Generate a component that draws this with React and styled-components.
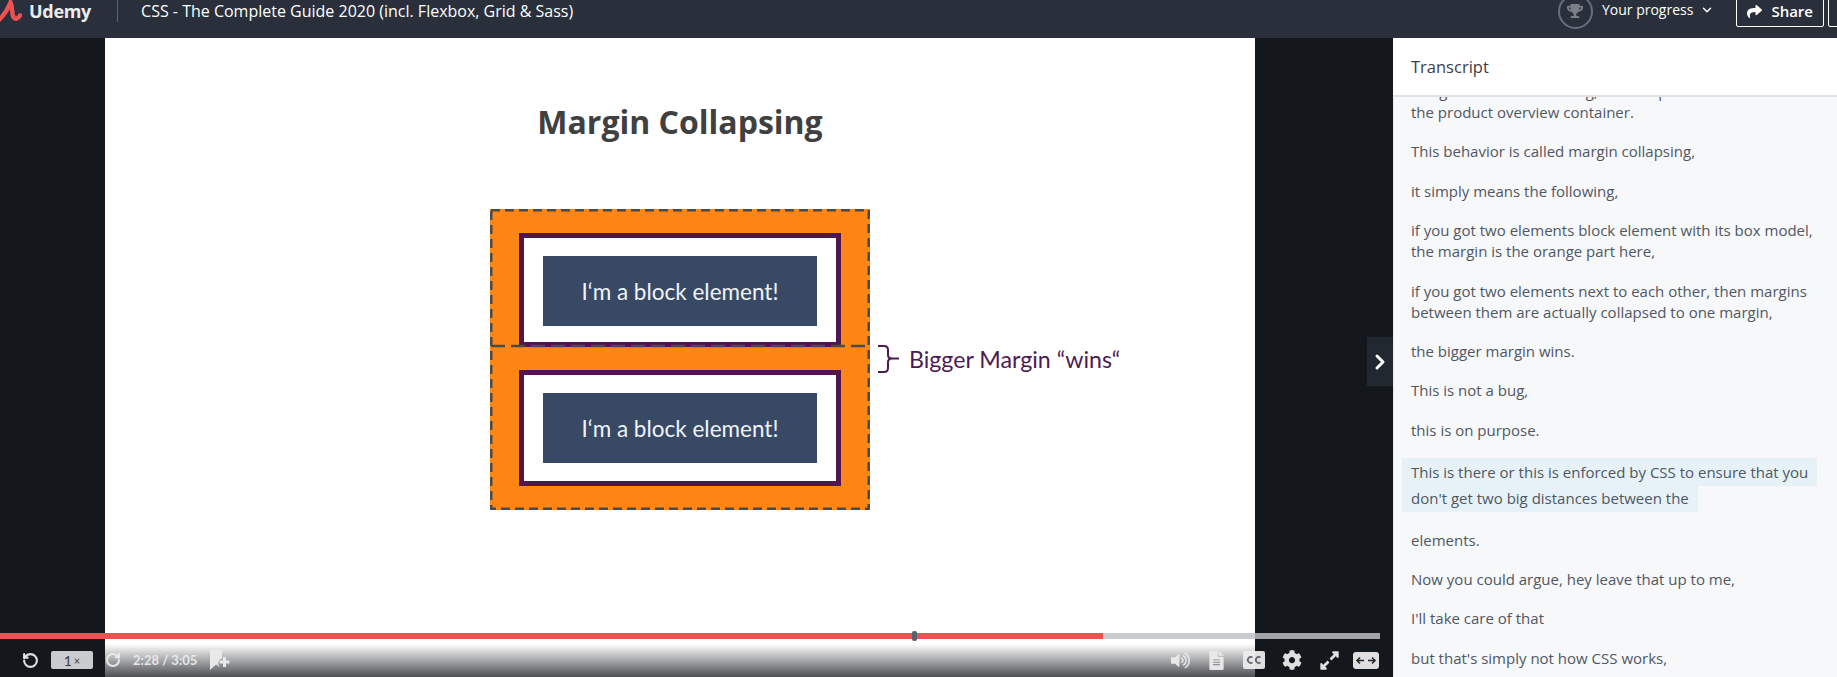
import React from "react";
import styled, { createGlobalStyle } from "styled-components";
import { ChevronDown, ChevronRight, RotateCcw, RotateCw } from "lucide-react";
import {
  FaCog,
  FaExpandAlt,
  FaFileAlt,
  FaShare,
  FaTrophy,
  FaVolumeUp,
} from "react-icons/fa";

const GlobalStyle = createGlobalStyle`
  html, body {
    margin: 0;
    padding: 0;
    height: 100%;
    overflow: hidden;
    background: #14171c;
    font-family: "Open Sans", "Liberation Sans", sans-serif;
  }
  * {
    box-sizing: border-box;
  }
`;

const Page = styled.div`
  height: 677px;
  display: flex;
  flex-direction: column;
  overflow: hidden;
`;

const Header = styled.header`
  flex: none;
  height: 54px;
  margin-top: -16px;
  display: flex;
  align-items: center;
  background: #29303b;
  color: #fff;
`;

const LogoMark = styled.svg`
  flex: none;
  width: 22px;
  height: 24px;
`;

const LogoText = styled.span`
  margin-left: 7px;
  font-size: 18px;
  font-weight: 700;
  letter-spacing: -0.3px;
  color: #ececea;
`;

const HeaderDivider = styled.div`
  width: 1px;
  height: 22px;
  margin: 0 23px 0 26px;
  background: #5d646e;
`;

const CourseTitle = styled.div`
  font-size: 16px;
`;

const HeaderRight = styled.div`
  margin-left: auto;
  display: flex;
  align-items: center;
`;

const ProgressRing = styled.div`
  width: 35px;
  height: 35px;
  border: 2px solid #686f7a;
  border-radius: 50%;
  display: flex;
  align-items: center;
  justify-content: center;
  color: #7b8088;
  font-size: 16px;
`;

const ProgressLabel = styled.span`
  margin-left: 9px;
  margin-bottom: 3px;
  font-size: 14px;
  display: flex;
  align-items: center;
  gap: 7px;
`;

const ShareButton = styled.button`
  height: 32px;
  margin-left: 22px;
  padding: 0 10px;
  display: flex;
  align-items: center;
  gap: 9px;
  background: transparent;
  border: 1px solid #fff;
  border-radius: 2px;
  color: #fff;
  font-family: inherit;
  font-size: 15px;
  font-weight: 600;
`;

const MoreButton = styled.div`
  width: 20px;
  height: 32px;
  margin-left: 4px;
  margin-right: -11px;
  border: 1px solid #fff;
  border-radius: 2px;
`;

const Main = styled.main`
  flex: 1;
  min-height: 0;
  display: flex;
`;

const Player = styled.section`
  position: relative;
  flex: 1;
  padding-left: 105px;
  display: flex;
  background: #14171c;
  overflow: hidden;
`;

const Slide = styled.div`
  flex: none;
  width: 1150px;
  padding-top: 62px;
  display: flex;
  flex-direction: column;
  align-items: center;
  background: #fff;
`;

const SlideTitle = styled.h1`
  margin: 0;
  height: 44px;
  line-height: 44px;
  font-size: 32px;
  font-weight: 700;
  color: #404040;
`;

const Diagram = styled.div`
  position: relative;
  width: 380px;
  margin-top: 65px;
  padding: 24px 29px 24px;
  display: flex;
  flex-direction: column;
  gap: 23px;
  background: #ff8614;
`;

const DashedOutline = styled.svg`
  position: absolute;
  left: 0;
  top: 0;
  width: 100%;
  height: 100%;
`;

const Block = styled.div`
  height: ${({ $height }) => $height}px;
  padding: 18px 19px;
  border: 5px solid #4f1650;
  background: #fff;
`;

const BlockContent = styled.div`
  height: 70px;
  display: flex;
  align-items: center;
  justify-content: center;
  background: #374965;
  color: #f0f3f7;
  font-family: Lato, sans-serif;
  font-size: 22.500px;
`;

const Annotation = styled.div`
  position: absolute;
  left: 387px;
  top: 136px;
  display: flex;
  align-items: center;
  gap: 9px;
  color: #4d1a52;
  font-family: Lato, sans-serif;
  font-size: 23.200px;
  white-space: nowrap;
`;

const Brace = styled.svg`
  flex: none;
  width: 23px;
  height: 28px;
`;

const PanelToggle = styled.div`
  position: absolute;
  top: 299px;
  right: 0;
  width: 26px;
  height: 49px;
  display: flex;
  align-items: center;
  justify-content: center;
  background: #222830;
  color: #fff;
`;

const Controls = styled.div`
  position: absolute;
  left: 0;
  right: 0;
  bottom: 0;
  height: 44px;
  background: linear-gradient(
    rgba(20, 23, 28, 0) 25%,
    rgba(20, 23, 28, 0.76) 100%
  );
`;

const ProgressTrack = styled.div`
  position: relative;
  height: 6px;
  margin-right: 13px;
  background: rgba(191, 193, 197, 0.83);
`;

const ProgressFill = styled.div`
  height: 100%;
  width: ${({ $percent }) => $percent}%;
  background: #ec5252;
`;

const ProgressThumb = styled.div`
  position: absolute;
  left: ${({ $percent }) => $percent}%;
  top: -2px;
  width: 5px;
  height: 10px;
  border-radius: 2px;
  background: #54646f;
`;

const ControlRow = styled.div`
  height: 38px;
  padding: 4px 14px 0 22px;
  display: flex;
  align-items: center;
  color: rgba(236, 236, 236, 0.94);
`;

const LeftControls = styled.div`
  display: flex;
  align-items: center;
  gap: 12px;
`;

const RightControls = styled.div`
  margin-left: auto;
  display: flex;
  align-items: center;
  gap: 17px;
`;

const SpeedBadge = styled.div`
  width: 42px;
  height: 18px;
  border-radius: 2px;
  display: flex;
  align-items: center;
  justify-content: center;
  gap: 2px;
  background: #c8cacd;
  color: #3c3f44;
  font-family: Lato, sans-serif;
  font-size: 14px;
`;

const SpeedUnit = styled.span`
  font-size: 11px;
`;

const TimeLabel = styled.span`
  font-family: Lato, sans-serif;
  font-size: 13px;
  font-weight: 700;
`;

const WideSlot = styled.span`
  display: flex;
  margin-left: -4px;
`;

const Sidebar = styled.aside`
  flex: none;
  width: 444px;
  display: flex;
  flex-direction: column;
  background: #f7f8fa;
  border-left: 1px solid #e8e9eb;
`;

const SidebarHeader = styled.div`
  position: relative;
  flex: none;
  height: 59px;
  margin-left: -1px;
  padding: 0 0 1px 18px;
  display: flex;
  align-items: center;
  background: #fff;
  border-bottom: 2px solid #e1e2e4;
  color: #3c3f47;
  font-size: 16.500px;
  font-weight: 500;
`;

const CueWindow = styled.div`
  flex: 1;
  min-height: 0;
  overflow: hidden;
`;

const CueList = styled.div`
  margin-top: -16px;
  padding: 0 18px 0 17px;
  display: flex;
  flex-direction: column;
  gap: 18.400px;
  color: #505763;
  font-size: 15px;
`;

const Cue = styled.p`
  margin: 0;
  white-space: pre-line;
  line-height: ${({ $active }) => ($active ? "26px" : "21px")};
`;

const CueHighlight = styled.span`
  margin-left: -9px;
  padding: 4px 9px;
  background: #e6f2f7;
  -webkit-box-decoration-break: clone;
  box-decoration-break: clone;
`;

const CUES = [
  { text: "margin above the heading, so on top of\nthe product overview container." },
  { text: "This behavior is called margin collapsing," },
  { text: "it simply means the following," },
  { text: "if you got two elements block element with its box model,\nthe margin is the orange part here," },
  { text: "if you got two elements next to each other, then margins\nbetween them are actually collapsed to one margin," },
  { text: "the bigger margin wins." },
  { text: "This is not a bug," },
  { text: "this is on purpose." },
  { text: "This is there or this is enforced by CSS to ensure that you\ndon't get two big distances between the", active: true },
  { text: "elements." },
  { text: "Now you could argue, hey leave that up to me," },
  { text: "I'll take care of that" },
  { text: "but that's simply not how CSS works," },
];

const BookmarkPlus = () => (
  <svg width="21" height="20" viewBox="0 0 21 20" fill="currentColor">
    <path d="M1 0h12v8.500a5 5 0 0 0-1 9.200L7 14.500 1 20z" />
    <path d="M14 7h3v3.500h3.500v3H17V17h-3v-3.500h-3.500v-3H14z" />
  </svg>
);

const CaptionIcon = () => (
  <svg width="22" height="18" viewBox="0 0 22 18">
    <rect width="22" height="18" rx="2" fill="currentColor" />
    <path
      d="M9.500 6.500a3 3 0 1 0 0 5M17.500 6.500a3 3 0 1 0 0 5"
      fill="none"
      stroke="#63666b"
      strokeWidth="1.800"
    />
  </svg>
);

const WideIcon = () => (
  <svg width="26" height="17" viewBox="0 0 26 17">
    <rect width="26" height="17" rx="3" fill="currentColor" />
    <path
      d="M11 8.500H4m3-3-3 3 3 3M15 8.500h7m-3-3 3 3-3 3"
      fill="none"
      stroke="#24272c"
      strokeWidth="1.600"
    />
  </svg>
);

function App() {
  return (
    <Page>
      <GlobalStyle />
      <Header>
        <LogoMark viewBox="0 0 22 24">
          <path
            d="M-1 21C4 16 8 10 10.500 3.500c2 4 1 10 3 14.500 1.500 3 4.500 2 6.500-1.500"
            fill="none"
            stroke="#ec5252"
            strokeWidth="4.500"
            strokeLinecap="round"
          />
        </LogoMark>
        <LogoText>Udemy</LogoText>
        <HeaderDivider />
        <CourseTitle>CSS - The Complete Guide 2020 (incl. Flexbox, Grid &amp; Sass)</CourseTitle>
        <HeaderRight>
          <ProgressRing>
            <FaTrophy />
          </ProgressRing>
          <ProgressLabel>
            Your progress
            <ChevronDown size={14} strokeWidth={2.500} />
          </ProgressLabel>
          <ShareButton>
            <FaShare size={15} />
            Share
          </ShareButton>
          <MoreButton />
        </HeaderRight>
      </Header>
      <Main>
        <Player>
          <Slide>
            <SlideTitle>Margin Collapsing</SlideTitle>
            <Diagram>
              <Block $height={114}>
                <BlockContent>I‘m a block element!</BlockContent>
              </Block>
              <Block $height={116}>
                <BlockContent>I‘m a block element!</BlockContent>
              </Block>
              <DashedOutline viewBox="0 0 380 301" preserveAspectRatio="none">
                <rect
                  x="1"
                  y="1"
                  width="378"
                  height="299"
                  fill="none"
                  stroke="#4a4a4a"
                  strokeWidth="3"
                  strokeDasharray="9 5"
                />
                <path
                  d="M1 137H379"
                  fill="none"
                  stroke="#4a4a4a"
                  strokeWidth="2.500"
                  strokeDasharray="14 6"
                />
              </DashedOutline>
              <Annotation>
                <Brace viewBox="0 0 23 28">
                  <path
                    d="M1 1h6q4 0 4 4v5q0 3.500 4 3.500h7M15 13.500q-4 0-4 3.500v6q0 4-4 4H1"
                    fill="none"
                    stroke="#4d1a52"
                    strokeWidth="2"
                  />
                </Brace>
                Bigger Margin “wins“
              </Annotation>
            </Diagram>
          </Slide>
          <PanelToggle>
            <ChevronRight size={24} strokeWidth={3} />
          </PanelToggle>
          <Controls>
            <ProgressTrack>
              <ProgressFill $percent={79.900} />
              <ProgressThumb $percent={66.100} />
            </ProgressTrack>
            <ControlRow>
              <LeftControls>
                <RotateCcw size={17} strokeWidth={3} />
                <SpeedBadge>
                  1<SpeedUnit>×</SpeedUnit>
                </SpeedBadge>
                <RotateCw size={16} strokeWidth={3} />
                <TimeLabel>2:28 / 3:05</TimeLabel>
                <BookmarkPlus />
              </LeftControls>
              <RightControls>
                <FaVolumeUp size={19} />
                <FaFileAlt size={19} />
                <CaptionIcon />
                <FaCog size={20} />
                <FaExpandAlt size={21} />
                <WideSlot>
                  <WideIcon />
                </WideSlot>
              </RightControls>
            </ControlRow>
          </Controls>
        </Player>
        <Sidebar>
          <SidebarHeader>Transcript</SidebarHeader>
          <CueWindow>
            <CueList>
              {CUES.map((cue) => (
                <Cue key={cue.text} $active={cue.active}>
                  {cue.active ? <CueHighlight>{cue.text}</CueHighlight> : cue.text}
                </Cue>
              ))}
            </CueList>
          </CueWindow>
        </Sidebar>
      </Main>
    </Page>
  );
}

export default App;
